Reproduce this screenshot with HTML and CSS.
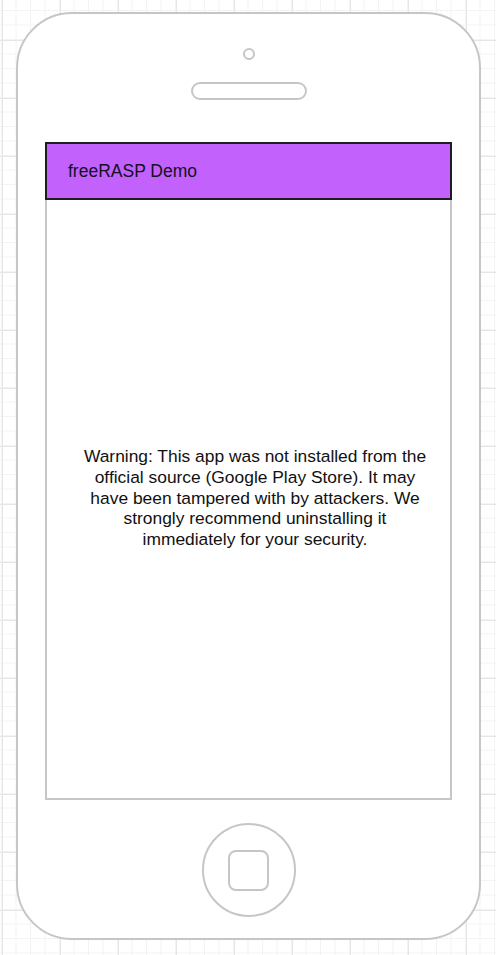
FILE: index.html
```html
<!DOCTYPE html>
<html lang="en">
  <head>
    <meta charset="UTF-8" />
    <meta name="viewport" content="width=device-width, initial-scale=1.0" />
    <title>freeRASP Demo</title>
    <link rel="stylesheet" href="styles.css">
  </head>
  <body>
    <div class="phone">
      <div class="camera"></div>
      <div class="speaker"></div>

      <div class="screen">
        <div class="app-bar">freeRASP Demo</div>
        <div class="screen-body">
          <p class="warning">
            Warning: This app was not installed from the official source
            (Google Play Store). It may have been tampered with by attackers.
            We strongly recommend uninstalling it immediately for your
            security.
          </p>
        </div>
      </div>

      <div class="home-button">
        <div class="home-square"></div>
      </div>
    </div>
  </body>
</html>
```

FILE: styles.css
```css
body {
  margin: 0;
  min-height: 955px;
  font-family: "Liberation Sans", Arial, sans-serif;
  background-color: #ffffff;
  background-image:
    linear-gradient(to right, #e6e6e6 1px, transparent 1px),
    linear-gradient(to bottom, #e6e6e6 1px, transparent 1px),
    linear-gradient(to right, #f3f3f3 1px, transparent 1px),
    linear-gradient(to bottom, #f3f3f3 1px, transparent 1px);
  background-size: 58px 58px, 58px 58px, 14.5px 14.5px, 14.5px 14.5px;
  background-position: 2px 40px, 2px 40px, 1px 10px, 1px 10px;
  overflow: hidden;
}

.phone {
  box-sizing: border-box;
  width: 465px;
  height: 928px;
  margin: 12px 0 0 16px;
  padding-top: 34px;
  border: 2px solid #c6c6c6;
  border-radius: 56px;
  background-color: #ffffff;
  display: flex;
  flex-direction: column;
  align-items: center;
}

.camera {
  box-sizing: border-box;
  width: 12px;
  height: 12px;
  border: 2px solid #c6c6c6;
  border-radius: 50%;
}

.speaker {
  box-sizing: border-box;
  width: 116px;
  height: 18px;
  margin-top: 22px;
  border: 2px solid #c6c6c6;
  border-radius: 9px;
}

.screen {
  width: 407px;
  height: 658px;
  margin-top: 42px;
  display: flex;
  flex-direction: column;
}

.app-bar {
  box-sizing: border-box;
  height: 58px;
  padding-left: 21px;
  border: 2px solid #1e1e1e;
  background-color: #c261fc;
  color: #111122;
  font-size: 17.5px;
  display: flex;
  align-items: center;
}

.screen-body {
  flex: 1;
  border: 2px solid #c6c6c6;
  border-top: none;
  display: flex;
  justify-content: center;
  align-items: center;
  padding: 0 20px 2px 33px;
}

.warning {
  margin: 0;
  font-size: 17.4px;
  line-height: 20.7px;
  color: #111111;
  text-align: center;
}

.home-button {
  box-sizing: border-box;
  width: 94px;
  height: 94px;
  margin-top: 23px;
  border: 2px solid #c6c6c6;
  border-radius: 50%;
  display: flex;
  justify-content: center;
  align-items: center;
}

.home-square {
  box-sizing: border-box;
  width: 41px;
  height: 41px;
  border: 2px solid #c6c6c6;
  border-radius: 8px;
}
```
